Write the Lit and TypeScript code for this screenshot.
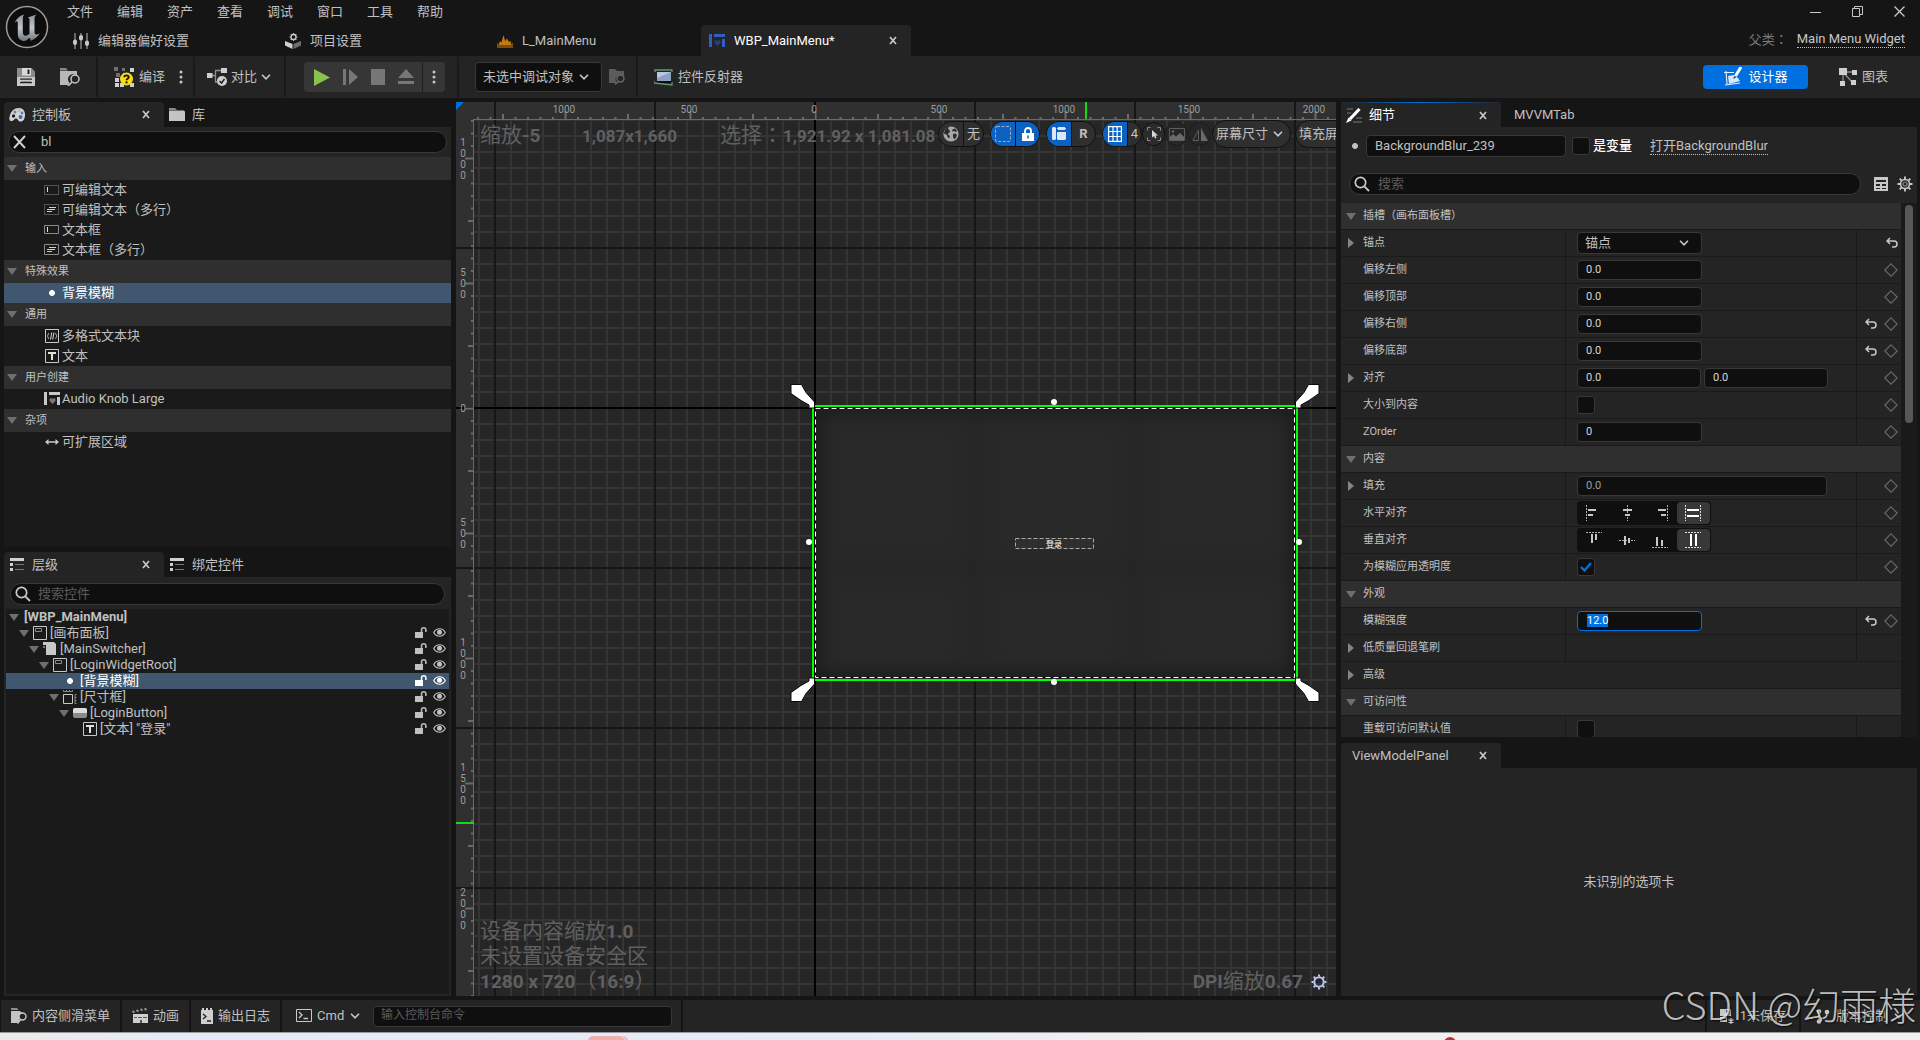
import { LitElement, html, svg, css, nothing, TemplateResult } from "lit";
import { customElement, query } from "lit/decorators.js";
import { classMap } from "lit/directives/class-map.js";
import { styleMap } from "lit/directives/style-map.js";

/* ---------- icons ---------- */

const icon = (w: number, h: number, body: unknown, vb = `0 0 ${w} ${h}`) =>
  html`<svg class="ic" width=${w} height=${h} viewBox=${vb} aria-hidden="true">${body}</svg>`;

const I: Record<string, () => TemplateResult> = {
  sliders: () => icon(16, 16, svg`<path fill="none" stroke="#8a8a8a" stroke-width="1.4" d="M2 0V16M8 0V16M14 0V16"/><path fill="#c8c8c8" d="M0 8.500a2 2 0 0 1 4 0v1.500a2 2 0 0 1-4 0zM6 4a2 2 0 0 1 4 0v1.500a2 2 0 0 1-4 0zM12 9.500a2 2 0 0 1 4 0v1.500a2 2 0 0 1-4 0z"/>`),
  project: () => icon(16, 16, svg`<path fill="#d0d0d0" d="M0 8l7.500 3V16L0 12.500z"/><path fill="#6e6e6e" d="M16 8l-7.500 3V16L16 12.500z"/><circle cx="8.500" cy="4" r="2.500" fill="none" stroke="#c8c8c8" stroke-width="1.300"/><path stroke="#c8c8c8" stroke-width="1.200" d="M8.500 0v1.500M8.500 6.500V8M4.500 4H6M11 4h1.500M5.700 1.200l1 1M10.300 5.800l1 1M11.300 1.200l-1 1M6.700 5.800l-1 1"/>`),
  level: () => icon(16, 14, svg`<path fill="#c47a10" d="M1.500 11L3 7l1.500 1.500L6.500 1l1.700 6L10 4.500 12 8l1.500-1 1.200 4z"/><path fill="#7d4c08" d="M0 9h1v2h14V9h1v5H0z"/>`),
  widget: () => icon(16, 13, svg`<path fill="#2f5fc4" d="M0 0h3v13H0zM5 0h11v3H5zM13 5h3v8h-3z"/><path fill="#24407c" d="M8.500 12L5.500 9V7l1.500-1 1.500 1L10 6l1.500 1v2z"/>`),
  widgetGrey: () => icon(16, 14, svg`<path fill="#c8c8c8" d="M0 0h3v13H0zM5 0h11v3H5zM13 5h3v8h-3z"/><path fill="#777" d="M8.500 12L5.500 9V7l1.500-1 1.500 1L10 6l1.500 1v2z"/>`),
  save: () => icon(18, 18, svg`<path fill="#8b8b8b" d="M0 0h14.500L18 3.500V18H0z"/><path fill="#c8c8c8" d="M0 9h18v9H0z"/><path fill="#d8d8d8" d="M5 0h9v7.500H5z"/><path fill="#242424" d="M10.500 1.500h2V6h-2zM3 10.500h12v1.300H3zM3 14h12v1.300H3z"/><path fill="#8b8b8b" d="M4 13h10v1H4z"/>`),
  browse: () => icon(20, 18, svg`<path fill="#888" d="M0 0h6l2 2.500H0z"/><path fill="#b8b8b8" d="M0 3h17v4.500A5 5 0 0 0 9.500 15L8 17H0z"/><circle cx="15" cy="11" r="4" fill="#242424" stroke="#c8c8c8" stroke-width="1.500"/><path stroke="#c8c8c8" stroke-width="1.600" d="M12 14l-4 4"/>`),
  browseDim: () => icon(16, 16, svg`<path fill="#5c5c5c" d="M0 0h6l2 2h7v5a4.500 4.500 0 0 0-7 7H0z"/><circle cx="11.500" cy="9.500" r="3.500" fill="#242424" stroke="#6a6a6a" stroke-width="1.400"/><path stroke="#6a6a6a" stroke-width="1.500" d="M9 12.500L6 15.500"/>`),
  compile: () => icon(20, 20, svg`<path fill="#6f6f6f" d="M0 0h4v4H0zM8 1h3v3H8zM2 6h4v4H2z"/><path fill="#cfcfcf" d="M16 1h4v4h-4zM1 11h4v4H1zM1 16h4v4H1zM6 16h4v4H6zM16 16h4v4h-4zM9 6h3v3H9z"/><circle cx="12.500" cy="12" r="6.500" fill="#f8dc1c"/><path fill="none" stroke="#1c1a00" stroke-width="1.900" d="M10.300 10.200c0-2.500 4.400-2.500 4.400 0 0 1.500-2.200 1.500-2.200 3"/><path fill="#1c1a00" d="M11.500 14.400h2v2h-2z"/>`),
  dots: () => icon(4, 14, svg`<g fill="#c8c8c8"><circle cx="2" cy="2" r="1.500"/><circle cx="2" cy="7" r="1.500"/><circle cx="2" cy="12" r="1.500"/></g>`),
  diff: () => icon(20, 18, svg`<path fill="none" stroke="#8f8f8f" stroke-width="1.300" d="M5 7.500h3.500V2.500H14M8.500 7.500V14h2"/><path fill="#cfcfcf" d="M0 5h5.500v5H0zM14 0h6v5h-6z"/><circle cx="15" cy="13" r="5" fill="#cfcfcf"/><path fill="none" stroke="#242424" stroke-width="1.500" d="M12.500 13l2 2 3-4"/>`),
  chev: () => icon(10, 6, svg`<path fill="none" stroke="#c8c8c8" stroke-width="1.600" d="M1 .8l4 4 4-4"/>`),
  play: () => icon(16, 17, svg`<path fill="#8bc24a" d="M0 0l16 8.500L0 17z"/>`),
  step: () => icon(15, 16, svg`<path fill="#777" d="M0 0h3v16H0zM6 0l9 8-9 8z"/>`),
  stop: () => icon(14, 16, svg`<path fill="#777" d="M0 0h14v16H0z"/>`),
  eject: () => icon(16, 16, svg`<path fill="#777" d="M8 0l8 9H0zM0 12h16v3H0z"/>`),
  reflector: () => icon(20, 17, svg`<path fill="#8fa0c8" d="M3 3h14v9H3z"/><path fill="#bcc6e2" d="M3 3h14L3 9z"/><path fill="#0c0c0c" d="M2 12h16v2H4z"/><path fill="none" stroke="#5c9a66" stroke-width="1.300" d="M1 3V1h17v2M0 12v2l18 2v-3"/>`),
  pen: () => icon(20, 20, svg`<path fill="none" stroke="#e8f0ff" stroke-width="1.100" d="M1 5.500h10M3 4l1 13M2 18l15-2"/><path fill="#dce6f6" d="M5 9l6-1 4 3 2 3-11 3z"/><path stroke="#fff" stroke-width="3" d="M18 0L12.500 9"/><path fill="#0a4a94" d="M11.500 9l2 1.200L10 12z"/>`),
  graph: () => icon(18, 18, svg`<path fill="none" stroke="#8c8c8c" stroke-width="1.300" d="M4 4h10M4 4l9 10M4 4v10"/><path fill="#cfcfcf" d="M0 0h8v7H0zM13 2h5v5h-5zM1 13h5v5H1zM12 12h5v5h-5z"/>`),
  palette: () => icon(16, 14, svg`<path fill="#d4d4d4" d="M10 0c4 0 6 3 6 7s-2 7-5 6.500c-2.500-.500-2-3-4-3s-2 2.500-4.500 2.500S0 10.500 1 7 5 0 10 0z"/><circle cx="4.500" cy="8" r="1.700" fill="#222"/><circle cx="6" cy="4" r="1.500" fill="#5a85b8"/><circle cx="10" cy="2.500" r="1.300" fill="#9fb6d0"/><circle cx="13" cy="5" r="1.400" fill="#5a85b8"/><circle cx="11.500" cy="9" r="2" fill="#3d6fae"/>`),
  folder: () => icon(16, 13, svg`<path fill="#8a8a8a" d="M0 0h6l2 2H0z"/><path fill="#c4c4c4" d="M0 2.500h15l1 1V13H0z"/>`),
  x: () => icon(8, 9, svg`<path stroke="#c8c8c8" stroke-width="1.700" d="M1 1l6 7M7 1L1 8"/>`),
  bigX: () => icon(13, 14, svg`<path stroke="#d0d0d0" stroke-width="1.900" d="M1 1l11 12M12 1L1 13"/>`),
  search: () => icon(16, 16, svg`<circle cx="6.500" cy="6.500" r="5.200" fill="none" stroke="#c8c8c8" stroke-width="1.700"/><path stroke="#c8c8c8" stroke-width="1.800" d="M10.300 10.300l4.700 4.700"/>`),
  list: () => icon(16, 13, svg`<path fill="#d0d0d0" d="M1 0h14v3H1zM1 5h3v3H1zM1 10h3v3H1z"/><path fill="#757575" d="M6 6h9v1H6zM6 11h9v1H6z"/>`),
  down: () => icon(10, 7, svg`<path fill="#6f6f6f" d="M0 0h10L5 7z"/>`),
  right: () => icon(7, 10, svg`<path fill="#858585" d="M0 0v10l6-5z"/>`),
  etext: () => icon(16, 10, svg`<path fill="none" stroke="#8a8a8a" stroke-dasharray="1 1" d="M.5.5h14v9H.5z"/><path fill="#e0e0e0" d="M3 2h1v5H3z"/>`),
  emtext: () => icon(16, 12, svg`<path fill="none" stroke="#8a8a8a" stroke-dasharray="1 1" d="M.5.5h14v10H.5z"/><path fill="#d0d0d0" d="M5 3h7v1H5zM3 5h8v1H3zM3 7h5v1H3z"/>`),
  tbox: () => icon(16, 10, svg`<path fill="none" stroke="#8a8a8a" d="M.5.5h14v8H.5z"/><path fill="#e0e0e0" d="M3 2h1v5H3z"/>`),
  mtbox: () => icon(16, 12, svg`<path fill="none" stroke="#8a8a8a" d="M.5.5h14v10H.5z"/><path fill="#d0d0d0" d="M5 3h7v1H5zM3 5h8v1H3zM3 7h5v1H3z"/>`),
  dot: () => icon(6, 6, svg`<path fill="currentColor" d="M2 0h2l2 2v2L4 6H2L0 4V2z"/>`),
  rich: () => icon(14, 14, svg`<path fill="none" stroke="#c8c8c8" d="M.5.5h13v13H.5z"/><path fill="none" stroke="#b0b0b0" stroke-width=".9" d="M3.800 4L2.500 7 3.800 10M10.500 4l1.300 3-1.300 3"/><path stroke="#d8d8d8" stroke-width="1" d="M6.800 3.500L5.500 10.500M9 3.500L7.700 10.500"/>`),
  text: () => icon(14, 14, svg`<path fill="none" stroke="#c8c8c8" d="M.5.5h13v13H.5z"/><path fill="#e0e0e0" d="M3 3h8v2H8v6H6V5H3z"/>`),
  expand: () => icon(14, 6, svg`<path stroke="#c8c8c8" stroke-width="1.500" d="M1 3h12"/><path fill="#c8c8c8" d="M0 3l3.500-3v6zM14 3l-3.500-3v6z"/>`),
  canvas: () => icon(14, 14, svg`<path fill="none" stroke="#c8c8c8" d="M.5.5h13v13H.5z"/><path fill="none" stroke="#8a8a8a" d="M2.500 2.500h6v3h-6z"/>`),
  switcher: () => icon(14, 14, svg`<path fill="#c8c8c8" d="M0 0h11l2 2v11H3V3H0z"/><path fill="#777" d="M0 4h2v2H0z"/>`),
  size: () => icon(14, 14, svg`<path fill="none" stroke="#c8c8c8" d="M.5 4.500h9v9h-9z"/><path fill="none" stroke="#8a8a8a" d="M.5 0v1.500h9V0M3.500 0v1.500M6.500 0v1.500M13.500 4.500h-1.500v9h1.500M12 7.500h1.500M12 10.500h1.500"/>`),
  btn: () => icon(14, 10, svg`<rect width="14" height="10" rx="2" fill="#8a8a8a"/><path fill="#dcdcdc" d="M0 5V2a2 2 0 0 1 2-2h10a2 2 0 0 1 2 2v3z"/>`),
  lock: () => icon(12, 12, svg`<path fill="currentColor" d="M0 5h8v6H0z"/><path fill="none" stroke="currentColor" stroke-width="1.500" d="M6.500 5V3a2.200 2.200 0 0 1 4.400 0v2"/>`),
  eye: () => icon(13, 10, svg`<path fill="none" stroke="currentColor" stroke-width="1.200" d="M.7 4.500C3.500-.5 9.500-.5 12.300 4.500 9.500 9.500 3.500 9.500.7 4.500z"/><circle cx="6.500" cy="4.300" r="2.500" fill="currentColor"/>`),
  globe: () => icon(16, 16, svg`<circle cx="8" cy="8" r="7.600" fill="#a8a8a8"/><path fill="#2c2c2c" d="M6 .8L5 3l1.500 1L7 6 5 7.500 5.500 9 7 10l-1 2.500L4.500 11 4 9 1 7.500C1.300 4 3 1.500 6 .8zM10.500 3l1.500-.5 2 2.500-1.500 1L11 5l-1.500.5L9 4zM10 8l2.500-.5L14 9l-1.500 3.500-1.500.5L10 11z"/>`),
  dashed: () => icon(16, 16, svg`<rect x=".5" y=".5" width="15" height="15" rx="1.500" fill="none" stroke="#9ab0cc" stroke-dasharray="3 1.500"/>`),
  padlock: () => icon(12, 14, svg`<path fill="#fff" d="M0 6h12v8H0z"/><path fill="none" stroke="#fff" stroke-width="1.900" d="M3 6.500V4a3 3 0 0 1 6 0v2.500"/><path fill="#0b62c2" d="M5.300 8.500h1.500v3H5.300z"/>`),
  layout: () => icon(14, 14, svg`<path fill="#dfe6f0" d="M0 1l1-1h2l1 1v11l-1 1H1l-1-1zM5 5h9v7l-1 1H6l-1-1zM6 0h7v3H6z"/><path fill="#dfe6f0" d="M5 1h9v1H5z"/>`),
  grid: () => icon(14, 16, svg`<path fill="none" stroke="#fff" stroke-width="1.200" d="M.6.6h12.800v14.800H.6zM5 .6v14.800M9.200.6v14.800M.6 5.500h12.800M.6 10.500h12.800"/>`),
  pick: () => icon(14, 14, svg`<path fill="none" stroke="#8a8a8a" d="M.5 3.500v-3h3M10.500.5h3v3M13.500 10.500v3h-3M3.500 13.500h-3v-3"/><path fill="#d8d8d8" d="M5 3l6 5.500H8.500L9.500 11 8 11.500 7 9 5 10.500z"/>`),
  image: () => icon(16, 13, svg`<path fill="none" stroke="#5c5c5c" d="M.5.5h15v12H.5z"/><path fill="#6a6a6a" d="M1 12V9l3-3 3 2.500L11 5l4 4v3z"/><circle cx="4" cy="3.500" r="1.200" fill="#6a6a6a"/>`),
  mirror: () => icon(16, 13, svg`<path fill="none" stroke="#5c5c5c" d="M6.500 2v10.500H1z"/><path fill="#6a6a6a" d="M9 0l7 13H9z"/>`),
  details: () => icon(16, 15, svg`<path stroke="#5c5c5c" stroke-width="1.300" d="M1 1h6M1 5h4M10 10h6M7 14h9"/><path stroke="#fff" stroke-width="3.200" d="M13.500 1L4 11"/><path fill="#fff" d="M2.500 9.500l3 3L0 15z"/>`),
  table: () => icon(14, 14, svg`<path fill="#c8c8c8" fill-rule="evenodd" d="M0 0h14v14H0zM2 3h10v2H2zM2 7h4v2H2zM8 7h4v2H8zM2 11h4v1H2zM8 11h4v1H8z"/>`),
  gear: () => icon(16, 16, svg`<circle cx="8" cy="8" r="4.500" fill="none" stroke="#c8c8c8" stroke-width="1.600"/><circle cx="8" cy="8" r="2" fill="none" stroke="#8a8a8a" stroke-width="1.200"/><path stroke="#c8c8c8" stroke-width="1.900" d="M8 .5v3M8 12.500v3M.5 8h3M12.500 8h3M2.700 2.700l2 2M11.300 11.300l2 2M13.300 2.700l-2 2M4.700 11.300l-2 2"/>`),
  gearBlue: () => icon(16, 16, svg`<circle cx="8" cy="8" r="4.700" fill="none" stroke="#b8c8f0" stroke-width="2"/><path stroke="#b8c8f0" stroke-width="2" d="M8 .5v2M8 13.500v2M.5 8h2M13.500 8h2M2.700 2.700l1.500 1.500M11.800 11.800l1.500 1.500M13.300 2.700l-1.500 1.500M4.200 11.800l-1.500 1.500"/>`),
  reset: () => icon(12, 12, svg`<path fill="none" stroke="#c8c8c8" stroke-width="1.500" d="M1 4h7a3 3 0 0 1 0 6H6M4 1L1 4l3 3"/>`),
  diamond: () => icon(14, 14, svg`<path fill="none" stroke="#6a6a6a" stroke-width="1.100" d="M7 .8L13.200 7 7 13.200.8 7z"/>`),
  drawer: () => icon(16, 16, svg`<path fill="#8a8a8a" d="M0 0h6l1.500 2H0z"/><path fill="#c4c4c4" d="M0 3h9l2 2-3 3v5l-2 2H0z"/><circle cx="11.500" cy="8.500" r="3.500" fill="#242424" stroke="#c8c8c8" stroke-width="1.400"/><path stroke="#c8c8c8" stroke-width="1.500" d="M9.500 11.500L6.500 15.500"/>`),
  clap: () => icon(16, 16, svg`<path fill="#9a9a9a" d="M0 3l2-.5 1 2L1 5zM4 2l2-.5 1 2L5 4zM8 1l2-.5 1 2L9 3zM12 .5L14 0l1 2-2 .5z"/><path fill="#cfcfcf" d="M1 6h15v9H1z"/><path fill="#555" d="M2 9h3v1H2zM6 9h4v1H6zM11 9h4v1h-4zM8 12h2v3H8z"/>`),
  log: () => icon(12, 16, svg`<path fill="#cfcfcf" d="M0 2h12v14H0zM1 0h2v3H1zM5 0h2v3H5zM9 0h2v3H9z"/><path fill="none" stroke="#242424" stroke-width="1.300" d="M2 6l3 2.500L2 11M6 13h4"/>`),
  cmd: () => icon(16, 14, svg`<path fill="none" stroke="#c8c8c8" d="M.5.5h15v12H.5z"/><path fill="none" stroke="#c8c8c8" stroke-width="1.400" d="M3 3l3 3-3 3M7.500 9.500H12"/>`),
  unsaved: () => icon(14, 15, svg`<path fill="#c8c8c8" d="M0 0h11v7H0zM0 8h7v5H0z"/><path fill="#242424" d="M6 1h2v3H6zM2 10h4v1H2z"/><path stroke="#c8c8c8" stroke-width="1.200" d="M11 9v6M8.500 10.500l5 3M13.500 10.500l-5 3"/>`),
  branch: () => icon(14, 15, svg`<path fill="none" stroke="#c8c8c8" stroke-width="1.400" d="M3 3v10M3 9.500c7 0 8-2 8-5"/><g fill="#c8c8c8"><circle cx="3" cy="2.500" r="2.300"/><circle cx="11" cy="3" r="2.300"/><circle cx="3" cy="12.500" r="2.300"/></g>`),
};

const alignIcons = [
  [
    svg`<path stroke="#b0b0b0" stroke-dasharray="2 1" d="M.5 0v16"/><path stroke="#c8c8c8" stroke-width="2" d="M2 5h8M2 10h5"/>`,
    svg`<path stroke="#b0b0b0" stroke-dasharray="2 1" d="M8.500 0v16"/><path stroke="#c8c8c8" stroke-width="2" d="M4 5h9M6 10h5"/>`,
    svg`<path stroke="#b0b0b0" stroke-dasharray="2 1" d="M15.500 0v16"/><path stroke="#c8c8c8" stroke-width="2" d="M6 5h8M9 10h5"/>`,
    svg`<path stroke="#e0e0e0" stroke-dasharray="2 1" d="M.5 0v16M15.500 0v16"/><path stroke="#fff" stroke-width="2" d="M2 5h12M2 11h12"/>`,
  ],
  [
    svg`<path stroke="#b0b0b0" stroke-dasharray="2 1" d="M0 .5h16"/><path stroke="#c8c8c8" stroke-width="2" d="M6 2v9M10 2v6"/>`,
    svg`<path stroke="#b0b0b0" stroke-dasharray="2 1" d="M0 8.500h16"/><path stroke="#c8c8c8" stroke-width="2" d="M6 4v9M10 6v5"/>`,
    svg`<path stroke="#b0b0b0" stroke-dasharray="2 1" d="M0 15.500h16"/><path stroke="#c8c8c8" stroke-width="2" d="M5 5v9M10 8v6"/>`,
    svg`<path stroke="#e0e0e0" stroke-dasharray="2 1" d="M0 .5h16M0 15.500h16"/><path stroke="#fff" stroke-width="2" d="M6 2v12M11 2v12"/>`,
  ],
];

const logo = html`<svg class="ic" width="44" height="44" viewBox="0 0 44 44" role="img" aria-label="Unreal Engine">
  <defs><linearGradient id="lg" x1="0" y1="0" x2="0" y2="1"><stop offset="0" stop-color="#8d9499"/><stop offset=".5" stop-color="#c0c6ca"/><stop offset="1" stop-color="#6f767b"/></linearGradient></defs>
  <circle cx="22" cy="22" r="20.500" fill="#0d0d0d" stroke="#9c9c9c" stroke-width="1.500"/>
  <path fill="url(#lg)" d="M9.500 18C12 13 15 10.500 19.500 9.500c-1.500 1.300-1.700 2.300-1.700 4.500v13c0 3 1.700 4.500 4.200 3.500l2.500-1.500V15c0-1.500-.500-2-1.700-2.500l8.700-3c-1.500 1.500-2 2.500-2 4.500v13c0 3 2 3.300 5.500 1-2.500 4-6 6.500-9 7.800l-1.500-3c-2 2-4 3.500-6 3.200-4-.700-5.700-3.500-5.700-6.500V18.500c0-3-1.300-2.700-3.300-.500z"/>
</svg>`;

/* ---------- shared styles ---------- */

const base = css`
  :host {
    --bg: #151515;
    --panel: #242424;
    --recess: #1a1a1a;
    --input: #0f0f0f;
    --line: #383838;
    --head: #2f2f2f;
    --text: #c0c0c0;
    --accent: #0070e0;
    --select: #40576f;
    display: block;
    box-sizing: border-box;
    color: var(--text);
    font: 13px/16px Roboto, "Noto Sans CJK SC", sans-serif;
  }
  *, *::before, *::after { box-sizing: border-box; }
  .ic { display: block; flex: none; }
  button, input, select {
    font: inherit; color: inherit; margin: 0; padding: 0; border: 0;
    background: none; appearance: none; outline: 0; border-radius: 0; min-width: 0;
  }
  button { display: flex; align-items: center; white-space: nowrap; }
  a { color: inherit; text-decoration: none; border-bottom: 1px dotted #c0c0c0; }
  .mid { font-family: "Noto Sans CJK TC", sans-serif; font-style: normal; }
  .drop { display: inline-grid; align-items: center; }
  .drop > select { grid-area: 1 / 1; width: 100%; height: 100%; white-space: nowrap; }
  .drop > .ic { grid-area: 1 / 1; justify-self: end; pointer-events: none; }
  .drop option { background: #0f0f0f; }
  .tabs { display: flex; flex: none; height: 25px; }
  .tab { width: 160px; padding: 0 8px 0 5px; gap: 7px; border-radius: 4px 4px 0 0; }
  .tab .ttl { flex: 1; text-align: left; }
  .tab.on { background: var(--panel); padding-right: 14px; }
  .pill {
    display: flex; align-items: center; height: 22px; gap: 10px; padding: 0 4px;
    border: 1px solid var(--line); border-radius: 11px; background: var(--input);
  }
  .pill input { flex: 1; height: 20px; padding-bottom: 2px; }
  .pill input::placeholder { color: #5c5c5c; }
`;

const drop = (cls: string, label: string, options: string[]) => html`
  <span class="drop ${cls}">
    <select aria-label=${label}>${options.map((o) => html`<option>${o}</option>`)}</select>
    ${I.chev()}
  </span>`;

const tab = (ic: unknown, title: string, on: boolean, extra = "") => html`
  <button class=${classMap({ tab: true, on, [extra || "plain"]: true })} role="tab" aria-selected=${on ? "true" : "false"}>
    ${ic}<span class="ttl">${title}</span>${on ? I.x() : nothing}
  </button>`;

/* ---------- title bar and asset tabs ---------- */

@customElement("ue-title-bar")
export class TitleBar extends LitElement {
  static styles = [base, css`
    :host { display: flex; height: 56px; padding-left: 5px; flex: none; }
    .logo { padding-top: 5px; }
    .main { flex: 1; display: flex; flex-direction: column; min-width: 0; }
    .menu { display: flex; height: 25px; padding-left: 18px; }
    .menu button { width: 50px; height: 23px; }
    .docs { display: flex; height: 31px; }
    .doc { width: 212px; padding: 0 14px 0 8px; gap: 9px; border-radius: 4px 4px 0 0; }
    .doc.first { width: 228px; padding-left: 24px; }
    .doc .ttl { flex: 1; text-align: left; }
    .doc.on { width: 210px; background: var(--panel); color: #fff; }
    .side { display: flex; flex-direction: column; align-items: flex-end; padding-right: 15px; }
    .win { display: flex; gap: 31px; height: 23px; align-items: center; }
    .parent { display: flex; gap: 9px; height: 33px; align-items: center; color: #7c7c7c; }
    .parent a { color: #c8c8c8; }
  `];
  render() {
    const menu = ["文件", "编辑", "资产", "查看", "调试", "窗口", "工具", "帮助"];
    return html`
      <div class="logo">${logo}</div>
      <div class="main">
        <nav class="menu">${menu.map((m) => html`<button>${m}</button>`)}</nav>
        <div class="docs" role="tablist">
          <button class="doc first" role="tab">${I.sliders()}<span class="ttl">编辑器偏好设置</span></button>
          <button class="doc" role="tab">${I.project()}<span class="ttl">项目设置</span></button>
          <button class="doc" role="tab">${I.level()}<span class="ttl">L_MainMenu</span></button>
          <button class="doc on" role="tab">${I.widget()}<span class="ttl">WBP_MainMenu*</span>${I.x()}</button>
        </div>
      </div>
      <div class="side">
        <div class="win">
          <button aria-label="最小化">${icon(11, 11, svg`<path stroke="#c8c8c8" d="M0 6.500h11"/>`)}</button>
          <button aria-label="还原">${icon(11, 11, svg`<path fill="none" stroke="#c8c8c8" d="M.5 2.500h7v8h-7zM2.500 2V.5h8v8H8"/>`)}</button>
          <button aria-label="关闭">${icon(11, 11, svg`<path stroke="#c8c8c8" stroke-width="1.300" d="M.5.5l10 10M10.500.5l-10 10"/>`)}</button>
        </div>
        <div class="parent"><span>父类<span class="mid">：</span></span><a href="#parent">Main Menu Widget</a></div>
      </div>`;
  }
}

/* ---------- toolbar ---------- */

@customElement("ue-toolbar")
export class Toolbar extends LitElement {
  static styles = [base, css`
    :host { display: flex; align-items: center; height: 42px; flex: none; background: var(--panel); padding-right: 32px; }
    .sec { display: flex; align-items: center; height: 40px; border-right: 2px solid #191919; }
    .s1 { width: 98px; padding-left: 17px; gap: 25px; }
    .s2 { width: 97px; padding-left: 16px; gap: 14px; }
    .s3 { width: 91px; padding-left: 12px; }
    .s4 { width: 173px; padding-left: 18px; }
    .s5 { width: 179px; padding-left: 16px; gap: 7px; }
    .s6 { padding-left: 16px; border: 0; flex: 1; }
    .s6 button { gap: 4px; }
    .s2 button { gap: 5px; }
    .s3 button { gap: 4px; }
    .play { display: flex; height: 30px; border-radius: 4px; background: #363636; overflow: hidden; }
    .run { display: flex; gap: 13px; padding: 0 8px 0 10px; align-items: center; border-right: 1px solid #1e1e1e; }
    .more { width: 22px; justify-content: center; }
    .dbg { width: 127px; height: 30px; padding: 0 12px 0 7px; border: 1px solid var(--line); border-radius: 4px; background: var(--input); }
    .mode { height: 24px; border-radius: 4px; gap: 5px; }
    .mode.on { width: 105px; justify-content: center; background: var(--accent); color: #fff; margin-right: 31px; }
  `];
  render() {
    return html`
      <div class="sec s1"><button aria-label="保存">${I.save()}</button><button aria-label="浏览">${I.browse()}</button></div>
      <div class="sec s2"><button>${I.compile()}编译</button><button aria-label="编译选项">${I.dots()}</button></div>
      <div class="sec s3"><button>${I.diff()}对比${I.chev()}</button></div>
      <div class="sec s4">
        <div class="play">
          <div class="run">
            <button aria-label="播放">${I.play()}</button><button aria-label="步进">${I.step()}</button>
            <button aria-label="停止">${I.stop()}</button><button aria-label="弹出">${I.eject()}</button>
          </div>
          <button class="more" aria-label="播放选项">${I.dots()}</button>
        </div>
      </div>
      <div class="sec s5">${drop("dbg", "调试对象", ["未选中调试对象"])}<button aria-label="定位调试对象">${I.browseDim()}</button></div>
      <div class="sec s6"><button>${I.reflector()}控件反射器</button></div>
      <button class="mode on">${I.pen()}设计器</button>
      <button class="mode">${I.graph()}图表</button>`;
  }
}

/* ---------- palette ---------- */

const palette: [string, [string, string, boolean?][]][] = [
  ["输入", [["etext", "可编辑文本"], ["emtext", "可编辑文本（多行）"], ["tbox", "文本框"], ["mtbox", "文本框（多行）"]]],
  ["特殊效果", [["dot", "背景模糊", true]]],
  ["通用", [["rich", "多格式文本块"], ["text", "文本"]]],
  ["用户创建", [["widgetGrey", "Audio Knob Large"]]],
  ["杂项", [["expand", "可扩展区域"]]],
];

@customElement("ue-palette")
export class Palette extends LitElement {
  static styles = [base, css`
    :host { display: flex; flex-direction: column; flex: 1 1 0; min-height: 0; }
    .body { flex: 1; background: var(--recess); overflow: hidden; }
    .find { padding: 4px; height: 30px; background: var(--panel); }
    .find .pill { gap: 15px; }
    .group { display: flex; align-items: center; width: 100%; height: 23px; gap: 8px; padding-left: 3px; background: var(--head); font-size: 11px; }
    .item { display: flex; align-items: center; height: 20px; padding-left: 40px; gap: 2px; }
    .item .slot { width: 16px; display: flex; justify-content: center; }
    .item.on { background: var(--select); color: #fff; }
  `];
  render() {
    return html`
      <div class="tabs" role="tablist">${tab(I.palette(), "控制板", true)}${tab(I.folder(), "库", false)}</div>
      <div class="body">
        <div class="find"><label class="pill">${I.bigX()}<input aria-label="搜索控制板" .value=${"bl"} /></label></div>
        ${palette.map(([g, items]) => html`
          <button class="group">${I.down()}${g}</button>
          ${items.map(([ic, t, on]) => html`<div class=${classMap({ item: true, on: !!on })}><span class="slot">${I[ic]()}</span><span>${t}</span></div>`)}`)}
      </div>`;
  }
}

/* ---------- hierarchy ---------- */

const tree: { d: number; ic?: string; t: string; leaf?: boolean; on?: boolean }[] = [
  { d: 0, t: "[WBP_MainMenu]" },
  { d: 1, ic: "canvas", t: "[画布面板]" },
  { d: 2, ic: "switcher", t: "[MainSwitcher]" },
  { d: 3, ic: "canvas", t: "[LoginWidgetRoot]" },
  { d: 4, ic: "dot", t: "[背景模糊]", leaf: true, on: true },
  { d: 4, ic: "size", t: "[尺寸框]" },
  { d: 5, ic: "btn", t: "[LoginButton]" },
  { d: 6, ic: "text", t: "[文本] \"登录\"", leaf: true },
];

@customElement("ue-hierarchy")
export class Hierarchy extends LitElement {
  static styles = [base, css`
    :host { display: flex; flex-direction: column; flex: 1 1 0; min-height: 0; }
    .body { flex: 1; display: flex; flex-direction: column; background: var(--panel); padding: 6px 2px 2px; }
    .find { padding: 0 4px; height: 26px; flex: none; }
    .find .pill { gap: 7px; }
    .tree { flex: 1; background: var(--recess); }
    .row { display: flex; align-items: center; height: 16px; padding-right: 3px; }
    .row.on { background: var(--select); color: #fff; }
    .row.root { font-weight: 700; }
    .tog { width: 15px; padding-left: 3px; }
    .slot { width: 18px; display: flex; justify-content: center; }
    .name { flex: 1; padding-left: 1px; }
    .root .name { padding-left: 3px; }
    .act { display: flex; gap: 6px; align-items: center; }
  `];
  render() {
    return html`
      <div class="tabs" role="tablist">${tab(I.list(), "层级", true)}${tab(I.list(), "绑定控件", false)}</div>
      <div class="body">
        <div class="find"><label class="pill">${I.search()}<input aria-label="搜索控件" placeholder="搜索控件" /></label></div>
        <div class="tree" role="tree">
          ${tree.map((n) => html`
            <div class=${classMap({ row: true, on: !!n.on, root: n.d === 0 })} role="treeitem" style=${styleMap({ paddingLeft: `${n.d * 10}px` })}>
              <span class="tog">${n.leaf ? nothing : I.down()}</span>
              ${n.ic ? html`<span class="slot">${I[n.ic]()}</span>` : nothing}
              <span class="name">${n.t}</span>
              ${n.d ? html`<span class="act"><button aria-label="锁定">${I.lock()}</button><button aria-label="可视性">${I.eye()}</button></span>` : nothing}
            </div>`)}
        </div>
      </div>`;
  }
}

/* ---------- designer viewport ---------- */

const ORIGIN = { x: 359, y: 306 };
const UNIT = 0.25;

@customElement("ue-viewport")
export class Viewport extends LitElement {
  static styles = [base, css`
    :host { position: relative; overflow: hidden; background: #262626; min-width: 0; }
    .bg { position: absolute; inset: 0; width: 100%; height: 100%; }
    .num { font: 10px Roboto, sans-serif; fill: #9c9c9c; text-anchor: middle; }
    .info, .notes, .dpi { position: absolute; font-size: 19px; line-height: 25px; font-weight: 700; color: #606060; white-space: nowrap; }
    .info { left: 24px; top: 19px; display: flex; align-items: baseline; }
    .info span:nth-child(1) { width: 102px; }
    .info span:nth-child(2) { width: 138px; }
    .info .sm { font-size: 17px; }
    .info i, .notes i, .dpi i { font-size: 21px; line-height: 25px; font-style: normal; font-weight: 400; }
    .notes { left: 24px; bottom: 2px; }
    .notes p { margin: 0; height: 25px; display: flex; align-items: center; }
    .dpi { right: 9px; bottom: 2px; display: flex; gap: 8px; align-items: center; }
    .bar { position: absolute; left: 482px; top: 18px; display: flex; align-items: center; white-space: nowrap; }
    .grp { display: flex; height: 26px; border: 1px solid #111; border-radius: 13px; background: #2f2f2f; overflow: hidden; flex: none; margin-right: 6px; }
    .grp button { width: 24px; justify-content: center; }
    .grp button + button { border-left: 1px solid #111; }
    .grp button.on { background: #0b62c2; color: #fff; }
    .grp .thin { width: 20px; }
    .grp .thin.s { width: 14px; }
    .grp .b { font-weight: 700; }
    .grp.last { margin-right: 0; }
    .round { width: 23px; height: 24px; border: 1px solid #111; border-radius: 12px; background: #2b2b2b; justify-content: center; flex: none; }
    .round.dim { border-color: #1c1c1c; background: #262626; }
    .sel { height: 28px; border: 1px solid #111; border-radius: 14px; background: #2f2f2f; width: 79px; padding: 0 7px 0 3px; margin: 0 3px 0 1px; flex: none; }
  `];

  private ticks() {
    const h: unknown[] = [];
    const v: unknown[] = [];
    for (let u = -1450; u <= 2400; u += 50) {
      const p = u * UNIT;
      const len = u % 500 === 0 ? 8 : u % 250 === 0 ? 5 : 2;
      const x = ORIGIN.x + p;
      const y = ORIGIN.y + p;
      if (x > 17) h.push(svg`<rect x=${x - 0.5} y=${17 - len} width="2" height=${len} fill="#6a6a6a"/>`);
      if (y > 17) v.push(svg`<rect x=${17 - len} y=${y - 0.5} width=${len} height="2" fill="#6a6a6a"/>`);
      if (u % 500 === 0) {
        const s = String(Math.abs(u));
        if (x > 17) h.push(svg`<text class="num" x=${x - 1} y="11">${s}</text>`);
        [...s].forEach((c, i) => {
          const ty = y + 4 + (i - (s.length - 1) / 2) * 11;
          if (y > 17) v.push(svg`<text class="num" x="7" y=${ty}>${c}</text>`);
        });
      }
    }
    return [h, v];
  }

  render() {
    const L = ORIGIN.x - 3, T = ORIGIN.y - 3, R = ORIGIN.x + 483, B = ORIGIN.y + 273;
    const petal = (x: number, y: number, sx: number, sy: number) => svg`
      <path transform="translate(${x} ${y}) scale(${sx} ${sy})" fill="#fff" stroke="#0a0a0a" stroke-width="1"
        d="M-21-20.500H-10.500L-6-12.500L2.500-3V3H-3V0L-11-4.500L-21-11.500Z"/>`;
    return html`
      <svg class="bg">
        <defs>
          <pattern id="minor" width="16" height="16" patternUnits="userSpaceOnUse" patternTransform="translate(6 1)">
            <path fill="#353535" d="M0 0h16v2H2v14H0z"/>
          </pattern>
          <pattern id="major" width="160" height="160" patternUnits="userSpaceOnUse" patternTransform="translate(38 145)">
            <path fill="#161616" d="M0 0h160v2H2v158H0z"/>
          </pattern>
          <filter id="soft" x="-10%" y="-10%" width="120%" height="120%" color-interpolation-filters="sRGB"><feGaussianBlur stdDeviation="9"/></filter>
          <clipPath id="board"><rect x=${ORIGIN.x} y=${ORIGIN.y} width="480" height="270"/></clipPath>
        </defs>
        <rect width="100%" height="100%" fill="url(#minor)"/>
        <rect width="100%" height="18" fill="#303030"/>
        <rect width="18" height="100%" fill="#303030"/>
        <rect width="100%" height="100%" fill="url(#major)"/>
        <rect x=${ORIGIN.x - 1} width="2" height="100%" fill="#000"/>
        <rect y=${ORIGIN.y - 1} width="100%" height="2" fill="#000"/>
        <rect width="17" height="17" fill="#303030"/>
        <rect x="17" y="17" width="100%" height="1" fill="#6a6a6a"/>
        <rect x="17" y="17" width="1" height="100%" fill="#6a6a6a"/>
        ${this.ticks()}
        <path d="M0 0h8L0 8z" fill="#0070e0"/>
        <rect x="629" y="0" width="2" height="17" fill="#18d818"/>
        <rect x="0" y="720" width="18" height="2" fill="#18d818"/>

        <rect x=${ORIGIN.x} y=${ORIGIN.y} width="480" height="270" fill="#292929"/>
        <g clip-path="url(#board)">
          <g filter="url(#soft)" fill="none">
            <rect x=${ORIGIN.x - 1} y=${ORIGIN.y - 1} width="482" height="272" stroke="#101010" stroke-width="8"/>
            <path stroke="#242424" stroke-width="8" d="M519 306v270M679 306v270M359 466h480"/>
          </g>
        </g>
        <rect x=${ORIGIN.x + 0.5} y=${ORIGIN.y + 0.5} width="479" height="269" fill="none" stroke="#000"/>
        <rect x=${ORIGIN.x + 0.5} y=${ORIGIN.y + 0.5} width="479" height="269" fill="none" stroke="#fff" stroke-dasharray="5 3"/>
        <rect x=${L + 1} y=${T + 1} width=${R - L - 2} height=${B - T - 2} fill="none" stroke="#00ff00" stroke-width="2"/>
        <rect x="559.500" y="436.500" width="78" height="10" fill="#2f2f2f" stroke="#a8a8a8" stroke-dasharray="4 2"/>
        <text x="598" y="445" text-anchor="middle" font-size="8" fill="#fff">登录</text>
        ${petal(L, T, 1, 1)}${petal(R, T, -1, 1)}${petal(L, B, 1, -1)}${petal(R, B, -1, -1)}
        <g fill="#fff">
          <circle cx="598" cy="300" r="3"/><circle cx="598" cy="580" r="3"/>
          <circle cx="353" cy="440" r="3"/><circle cx="843" cy="440" r="3"/>
        </g>
      </svg>
      <div class="info"><span><i>缩放</i>-5</span><span class="sm">1,087x1,660</span><span class="sm"><i>选择</i><i class="mid">：</i>1,921.92 x 1,081.08</span></div>
      <div class="bar">
        <div class="grp"><button aria-label="本地化">${I.globe()}</button><button class="thin">无</button></div>
        <div class="grp"><button class="on" aria-label="轮廓">${I.dashed()}</button><button class="on" aria-label="遵守锁定">${I.padlock()}</button></div>
        <div class="grp"><button class="on" aria-label="布局变换">${I.layout()}</button><button class="b">R</button></div>
        <div class="grp last"><button class="on" aria-label="网格对齐">${I.grid()}</button><button class="thin s">4</button></div>
        <button class="round" aria-label="选择">${I.pick()}</button>
        <button class="round dim" aria-label="图像">${I.image()}</button>
        <button class="round dim" aria-label="镜像">${I.mirror()}</button>
        ${drop("sel", "屏幕尺寸", ["屏幕尺寸"])}
        ${drop("sel", "填充屏幕", ["填充屏幕"])}
      </div>
      <div class="notes"><p><i>设备内容缩放</i>1.0</p><p><i>未设置设备安全区</i></p><p>1280 x 720<i>（</i>16:9<i>）</i></p></div>
      <div class="dpi"><span>DPI<i>缩放</i>0.67</span><button aria-label="DPI 设置">${I.gearBlue()}</button></div>`;
  }
}

/* ---------- details ---------- */

type Kind = "head" | "num" | "pair" | "wide" | "check" | "checked" | "anchor" | "h" | "v" | "edit" | "none" | "group";
interface Prop { k: Kind; t: string; v?: string; exp?: boolean; reset?: boolean; key?: boolean }

const props: Prop[] = [
  { k: "head", t: "插槽（画布面板槽）" },
  { k: "anchor", t: "锚点", exp: true, reset: true },
  { k: "num", t: "偏移左侧", v: "0.0", key: true },
  { k: "num", t: "偏移顶部", v: "0.0", key: true },
  { k: "num", t: "偏移右侧", v: "0.0", key: true, reset: true },
  { k: "num", t: "偏移底部", v: "0.0", key: true, reset: true },
  { k: "pair", t: "对齐", v: "0.0", exp: true, key: true },
  { k: "check", t: "大小到内容", key: true },
  { k: "num", t: "ZOrder", v: "0", key: true },
  { k: "head", t: "内容" },
  { k: "wide", t: "填充", v: "0.0", exp: true, key: true },
  { k: "h", t: "水平对齐", key: true },
  { k: "v", t: "垂直对齐", key: true },
  { k: "checked", t: "为模糊应用透明度", key: true },
  { k: "head", t: "外观" },
  { k: "edit", t: "模糊强度", v: "12.0", key: true, reset: true },
  { k: "none", t: "低质量回退笔刷", exp: true },
  { k: "group", t: "高级", exp: true },
  { k: "head", t: "可访问性" },
  { k: "check", t: "重载可访问默认值" },
];

@customElement("ue-details")
export class Details extends LitElement {
  static styles = [base, css`
    :host { display: flex; flex-direction: column; flex: 635 1 0; min-height: 0; }
    .tab.lit { border-top: 1px solid; border-image: linear-gradient(90deg, #242424, #0070e0, #242424) 1; color: #fff; }
    .tab.mv { padding-left: 13px; gap: 0; }
    .top { background: var(--panel); height: 76px; flex: none; padding: 8px 4px 0 8px; }
    .id { display: flex; align-items: center; height: 22px; }
    .id > .ic { margin: 0 8px 0 3px; }
    .id .nm { width: 200px; height: 22px; border: 1px solid var(--line); border-radius: 4px; background: var(--input); padding: 0 8px 2px; }
    .id label { display: flex; align-items: center; gap: 3px; color: #fff; font-weight: 500; margin: 0 18px 0 6px; }
    .tick { width: 18px; height: 18px; border: 1px solid var(--line); border-radius: 3px; background: var(--input); display: block; }
    .find { display: flex; align-items: center; gap: 9px; margin-top: 16px; }
    .find .pill { flex: 1; gap: 8px; margin-right: 4px; }
    .scroll { flex: 1; min-height: 0; display: flex; background: var(--recess); }
    .list { flex: 1; overflow: hidden; font-size: 11px; }
    .track { width: 16px; padding: 2px 4px; }
    .thumb { width: 8px; height: 218px; border-radius: 4px; background: #575757; }
    .row { display: grid; grid-template-columns: 224px 1fr 45px; height: 27px; border-bottom: 1px solid var(--recess); background: var(--panel); }
    .row.head, .row.group { display: flex; }
    .row.head { background: var(--head); }
    .name { display: flex; align-items: center; }
    .arr { width: 22px; padding-left: 7px; flex: none; display: flex; }
    .head .arr { padding-left: 5px; }
    .val { border-left: 1px solid var(--recess); padding-left: 11px; display: flex; align-items: center; gap: 3px; }
    .act { border-left: 1px solid var(--recess); display: flex; align-items: center; justify-content: flex-end; gap: 7px; padding-right: 3px; }
    .box { width: 125px; height: 20px; border: 1px solid var(--line); border-radius: 4px; background: var(--input); padding: 0 8px 2px; color: #d8d8d8; }
    .pair .box { width: 124px; }
    .box.wide { width: 250px; color: #a0a0a0; }
    .box.edit { border-color: var(--accent); color: #fff; padding-left: 9px; }
    .box::selection { background: var(--accent); color: #fff; }
    .anch { width: 125px; height: 22px; border: 1px solid var(--line); border-radius: 4px; background: var(--input); padding: 0 12px 0 7px; font-size: 13px; }
    .mark { display: grid; place-items: center; }
    .mark > * { grid-area: 1 / 1; }
    .mark .ic { pointer-events: none; }
    .seg { display: flex; height: 24px; background: var(--input); border-radius: 4px; padding: 1px; }
    .seg button { width: 33px; padding-right: 1px; justify-content: center; border-radius: 4px; }
    .seg button.on { background: #383838; }
  `];

  @query(".box.edit") private edit!: HTMLInputElement;

  firstUpdated() {
    this.edit.focus();
    this.edit.select();
  }

  private value(p: Prop) {
    const seg = (row: number) => html`<div class="seg">${alignIcons[row].map((b, i) => html`
      <button class=${classMap({ on: i === 3 })} aria-label="${p.t} ${i + 1}">${icon(16, 16, b)}</button>`)}</div>`;
    switch (p.k) {
      case "anchor": return drop("anch", p.t, ["锚点"]);
      case "num": return html`<input class="box" aria-label=${p.t} .value=${p.v!} />`;
      case "pair": return html`<input class="box" aria-label="对齐 X" .value=${p.v!} /><input class="box" aria-label="对齐 Y" .value=${p.v!} />`;
      case "wide": return html`<input class="box wide" aria-label=${p.t} .value=${p.v!} />`;
      case "edit": return html`<input class="box edit" aria-label=${p.t} .value=${p.v!} />`;
      case "check": return html`<input type="checkbox" class="tick" aria-label=${p.t} />`;
      case "checked": return html`<span class="mark"><input type="checkbox" class="tick" aria-label=${p.t} checked />${icon(12, 10, svg`<path fill="none" stroke="#0070e0" stroke-width="2.400" d="M1 5l3.500 3.500L11 1"/>`)}</span>`;
      case "h": return seg(0);
      case "v": return seg(1);
      default: return nothing;
    }
  }

  render() {
    return html`
      <div class="tabs" role="tablist">${tab(I.details(), "细节", true, "lit")}${tab(nothing, "MVVMTab", false, "mv")}</div>
      <div class="top">
        <div class="id">
          ${I.dot()}<input class="nm" aria-label="控件名称" .value=${"BackgroundBlur_239"} />
          <label><input type="checkbox" class="tick" />是变量</label>
          <a href="#open">打开BackgroundBlur</a>
        </div>
        <div class="find">
          <label class="pill">${I.search()}<input aria-label="搜索" placeholder="搜索" /></label>
          <button aria-label="列视图">${I.table()}</button><button aria-label="设置">${I.gear()}</button>
        </div>
      </div>
      <div class="scroll">
        <div class="list">
          ${props.map((p) => html`
            <div class="row ${p.k}">
              <div class="name"><span class="arr">${p.k === "head" ? I.down() : p.exp ? I.right() : nothing}</span><span>${p.t}</span></div>
              ${p.k === "head" || p.k === "group" ? nothing : html`
                <div class="val">${this.value(p)}</div>
                <div class="act">
                  ${p.reset ? html`<button aria-label="重置${p.t}">${I.reset()}</button>` : nothing}
                  ${p.key ? html`<button aria-label="关键帧${p.t}">${I.diamond()}</button>` : nothing}
                </div>`}
            </div>`)}
        </div>
        <div class="track"><div class="thumb"></div></div>
      </div>`;
  }
}

@customElement("ue-view-model")
export class ViewModel extends LitElement {
  static styles = [base, css`
    :host { display: flex; flex-direction: column; flex: 253 1 0; min-height: 0; }
    .tab { padding-left: 11px; gap: 0; }
    .body { flex: 1; background: var(--panel); display: grid; place-items: center; }
  `];
  render() {
    return html`
      <div class="tabs" role="tablist">${tab(nothing, "ViewModelPanel", true)}</div>
      <div class="body">未识别的选项卡</div>`;
  }
}

/* ---------- status bar ---------- */

@customElement("ue-status-bar")
export class StatusBar extends LitElement {
  static styles = [base, css`
    :host { display: flex; height: 32px; flex: none; gap: 2px; padding-left: 1px; }
    :host > * { background: var(--panel); }
    .seg { padding: 0 10px; gap: 5px; }
    .con { display: flex; align-items: center; padding: 0 9px 0 14px; gap: 5px; }
    .cmd { width: 43px; margin-right: 8px; height: 20px; }
    .con input { width: 299px; height: 21px; border: 1px solid var(--line); border-radius: 4px; background: var(--input); padding: 0 7px 2px; font-size: 12px; }
    .con input::placeholder { color: #5c5c5c; }
    .fill { flex: 1; }
    .right { padding: 0 13px; gap: 6px; }
    .right.vc { padding: 0 16px 0 15px; }
  `];
  render() {
    return html`
      <button class="seg">${I.drawer()}内容侧滑菜单</button>
      <button class="seg">${I.clap()}动画</button>
      <button class="seg">${I.log()}输出日志</button>
      <div class="con">${I.cmd()}${drop("cmd", "控制台类型", ["Cmd"])}<input aria-label="控制台命令" placeholder="输入控制台命令" /></div>
      <div class="fill"></div>
      <button class="right">${I.unsaved()}1未保存</button>
      <button class="right vc">${I.branch()}版本控制 ${I.chev()}</button>`;
  }
}

/* ---------- application ---------- */

@customElement("app-root")
export class AppRoot extends LitElement {
  static styles = [base, css`
    :host { display: flex; flex-direction: column; height: 100vh; min-height: 800px; position: relative; overflow: hidden; background: var(--bg); }
    .work { flex: 1; min-height: 0; display: grid; grid-template-columns: 447px minmax(0, 1fr) 576px; gap: 5px; padding: 4px 3px 4px 4px; }
    .col { display: flex; flex-direction: column; gap: 6px; min-height: 0; }
    .desk { flex: none; height: 8px; border-top: 1px solid #9a9a9c; background: linear-gradient(90deg, #ecebea, #e4eaf7 10%, #e6ebf6 45%, #f0f0f0 60%); }
    .desk svg { display: block; width: 100%; height: 7px; }
    .mark { position: absolute; right: 4px; bottom: 8px; font: 300 38px/56px "Noto Sans CJK SC", sans-serif; color: #ffffffb8; text-shadow: 1px 1px 2px #000c; pointer-events: none; white-space: nowrap; }
  `];
  render() {
    return html`
      <ue-title-bar></ue-title-bar>
      <ue-toolbar></ue-toolbar>
      <main class="work">
        <div class="col"><ue-palette></ue-palette><ue-hierarchy></ue-hierarchy></div>
        <ue-viewport></ue-viewport>
        <div class="col"><ue-details></ue-details><ue-view-model></ue-view-model></div>
      </main>
      <ue-status-bar></ue-status-bar>
      <div class="desk"><svg aria-hidden="true"><path fill="#efb0ac" d="M588 7c1-3 3-4 5-4h26c3 0 5 2 6 4zM622 3c3 0 5 2 6 4h-2c-1-2-2-3-4-4z"/><circle cx="1450" cy="10" r="6" fill="#c03030"/></svg></div>
      <div class="mark">CSDN @幻雨様</div>`;
  }
}
